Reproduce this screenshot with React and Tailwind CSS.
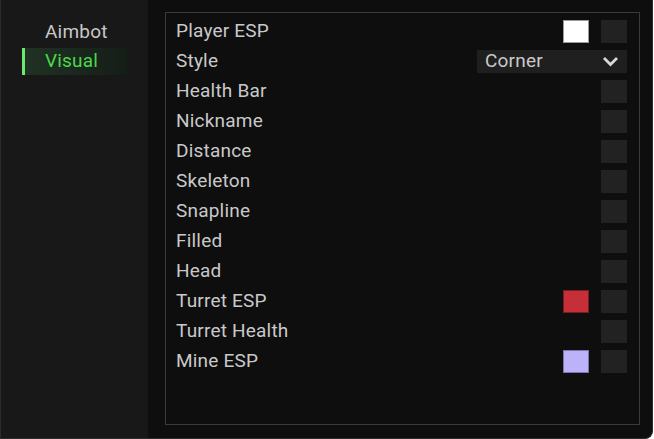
import React, { useState } from "react";

const rows = [
  { label: "Player ESP", color: "#ffffff", border: "#9a9a9a" },
  { label: "Style", combo: "Corner" },
  { label: "Health Bar" },
  { label: "Nickname" },
  { label: "Distance" },
  { label: "Skeleton" },
  { label: "Snapline" },
  { label: "Filled" },
  { label: "Head" },
  { label: "Turret ESP", color: "#c62f37", border: "#7a1d22" },
  { label: "Turret Health" },
  { label: "Mine ESP", color: "#bcb2fa", border: "#7d74b0" },
];

const Checkbox = () => (
  <div className="w-[26px] h-[23px] bg-[#222222]" />
);

const Row = ({ row }) => (
  <div className="flex items-center h-[30px]">
    <span className="flex-1 text-[19px] tracking-[0.2px] text-[#c9c9c9]">{row.label}</span>
    {row.combo ? (
      <div className="w-[150px] h-[23px] bg-[#1f1f1f] flex items-center justify-between pl-2 pr-2">
        <span className="text-[19px] tracking-[0.2px] text-[#c9c9c9]">{row.combo}</span>
        <svg width="17" height="12" viewBox="0 0 17 12">
          <path d="M2 3 L8.5 9.5 L15 3" fill="none" stroke="#d8d8d8" strokeWidth="2.8" />
        </svg>
      </div>
    ) : (
      <div className="flex items-center gap-3">
        {row.color && (
          <div
            className="w-[26px] h-[23px] border"
            style={{ backgroundColor: row.color, borderColor: row.border }}
          />
        )}
        <Checkbox />
      </div>
    )}
  </div>
);

export default function App() {
  const [tab, setTab] = useState("Visual");

  return (
    <div
      className="w-[653px] h-[439px] flex bg-[#0e0e0e] border-l border-r border-b border-[#2c2c2c] rounded-br-lg overflow-hidden"
      style={{ fontFamily: "Roboto, 'Liberation Sans', sans-serif" }}
    >
      {/* sidebar tabs */}
      <div className="w-[147px] bg-[#181818] pt-[19px] pl-[21px]">
        {["Aimbot", "Visual"].map((name) => {
          const active = name === tab;
          return (
            <button
              key={name}
              onClick={() => setTab(name)}
              className={`w-[105px] h-[27px] flex items-center text-left text-[19px] tracking-[0.2px] ${
                active
                  ? "bg-gradient-to-r from-[#203224] to-[#151d17] text-[#4bd84b] border-l-[3px] border-[#6ee86e] pl-[20px]"
                  : "text-[#c8c8c8] pl-[23px] mb-[2px]"
              }`}
            >
              {name}
            </button>
          );
        })}
      </div>

      {/* settings panel */}
      <div className="flex-1 pt-[12px] pl-[17px] pr-[12px] pb-[13px]">
        <div className="h-full border border-[#3a3a3a] pt-[3px] pl-[10px] pr-[12px]">
          {rows.map((row) => (
            <Row key={row.label} row={row} />
          ))}
        </div>
      </div>
    </div>
  );
}
